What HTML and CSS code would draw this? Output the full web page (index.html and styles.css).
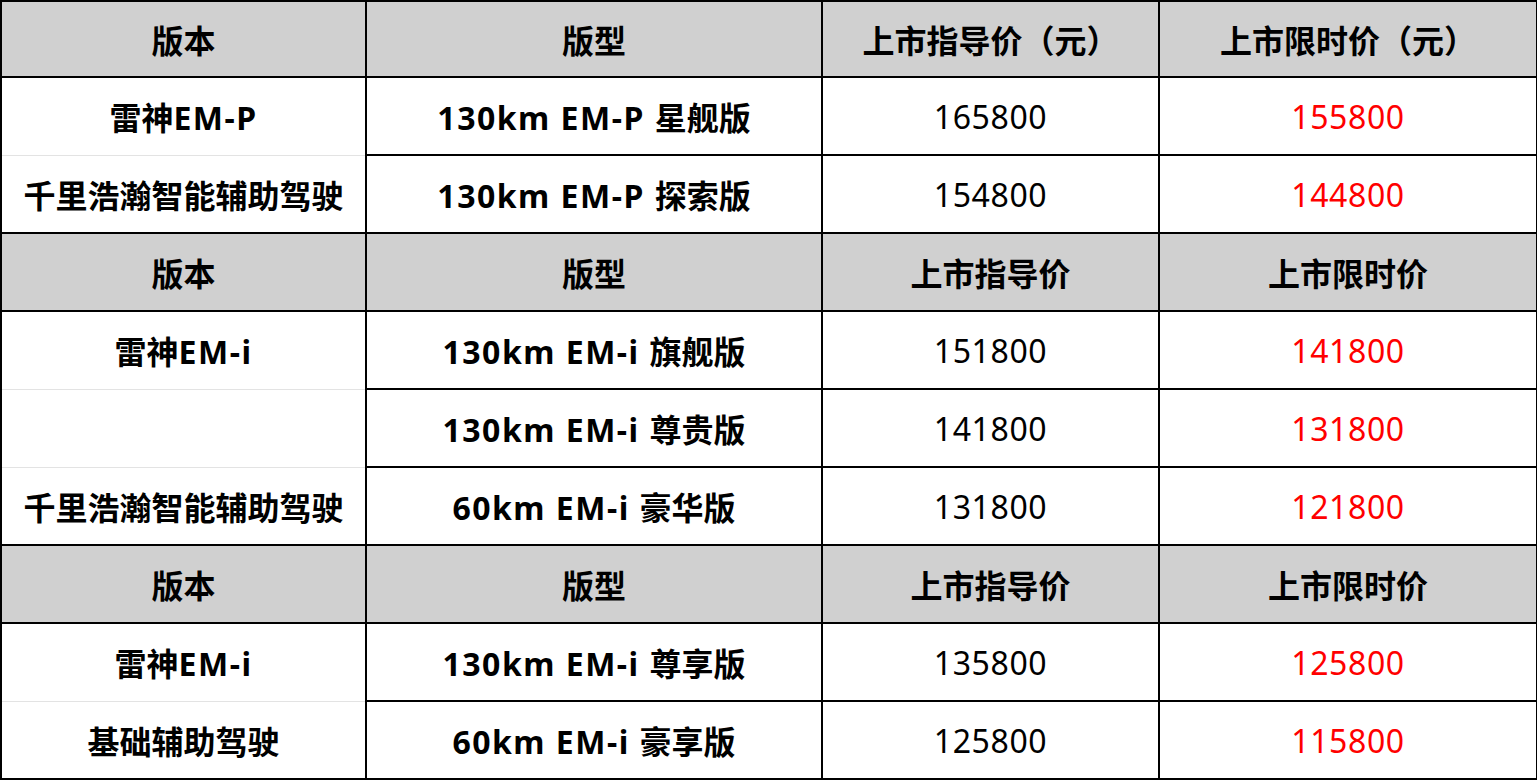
FILE: index.html
```html
<!DOCTYPE html>
<html lang="zh-CN">
<head>
<meta charset="utf-8">
<link rel="stylesheet" href="styles.css">
</head>
<body>
<table class="price">
  <colgroup>
    <col class="c1"><col class="c2"><col class="c3"><col class="c4">
  </colgroup>
  <tr class="head first">
    <th>版本</th><th>版型</th><th>上市指导价（元）</th><th>上市限时价（元）</th>
  </tr>
  <tr>
    <td class="name">雷神<span class="lat">EM-P</span></td><td class="model"><span class="lat">130km EM-P </span>星舰版</td><td class="num">165800</td><td class="num red">155800</td>
  </tr>
  <tr>
    <td class="name">千里浩瀚智能辅助驾驶</td><td class="model"><span class="lat">130km EM-P </span>探索版</td><td class="num">154800</td><td class="num red">144800</td>
  </tr>
  <tr class="head">
    <th>版本</th><th>版型</th><th>上市指导价</th><th>上市限时价</th>
  </tr>
  <tr>
    <td class="name">雷神<span class="lat">EM-i</span></td><td class="model"><span class="lat">130km EM-i </span>旗舰版</td><td class="num">151800</td><td class="num red">141800</td>
  </tr>
  <tr>
    <td class="name"></td><td class="model"><span class="lat">130km EM-i </span>尊贵版</td><td class="num">141800</td><td class="num red">131800</td>
  </tr>
  <tr>
    <td class="name">千里浩瀚智能辅助驾驶</td><td class="model"><span class="lat">60km EM-i </span>豪华版</td><td class="num">131800</td><td class="num red">121800</td>
  </tr>
  <tr class="head">
    <th>版本</th><th>版型</th><th>上市指导价</th><th>上市限时价</th>
  </tr>
  <tr>
    <td class="name">雷神<span class="lat">EM-i</span></td><td class="model"><span class="lat">130km EM-i </span>尊享版</td><td class="num">135800</td><td class="num red">125800</td>
  </tr>
  <tr class="last">
    <td class="name">基础辅助驾驶</td><td class="model"><span class="lat">60km EM-i </span>豪享版</td><td class="num">125800</td><td class="num red">115800</td>
  </tr>
</table>
</body>
</html>
```

FILE: styles.css
```css
html, body {
  margin: 0;
  padding: 0;
  background: #ffffff;
}

.price {
  border-collapse: collapse;
  table-layout: fixed;
  width: 1536px;
  font-family: "Noto Sans", "Noto Sans CJK SC", sans-serif;
  color: #000;
}

.c1 { width: 365px; }
.c2 { width: 456px; }
.c3 { width: 337px; }
.c4 { width: 378px; }

.price th,
.price td {
  height: 76px;
  padding: 0;
  text-align: center;
  vertical-align: middle;
  border: 2px solid #000;
  font-size: 32px;
  white-space: nowrap;
}

.price tr {
  height: 78px;
}

.price tr.first {
  height: 76px;
}

.price tr.first th {
  height: 74px;
}

.price th {
  background: #d0d0d0;
  font-weight: bold;
}

.price td {
  font-weight: normal;
}

.price td.name {
  font-weight: bold;
  border-top: 1px solid #e3e3e3;
  border-bottom: 1px solid #e3e3e3;
}

.price td.model {
  font-weight: bold;
}

.lat {
  letter-spacing: 1.5px;
}

.price td.num {
  letter-spacing: 0.6px;
}

.price td.red {
  color: #ff0000;
}

.price tr.last td {
  border-bottom: 2px solid #000;
}
```
